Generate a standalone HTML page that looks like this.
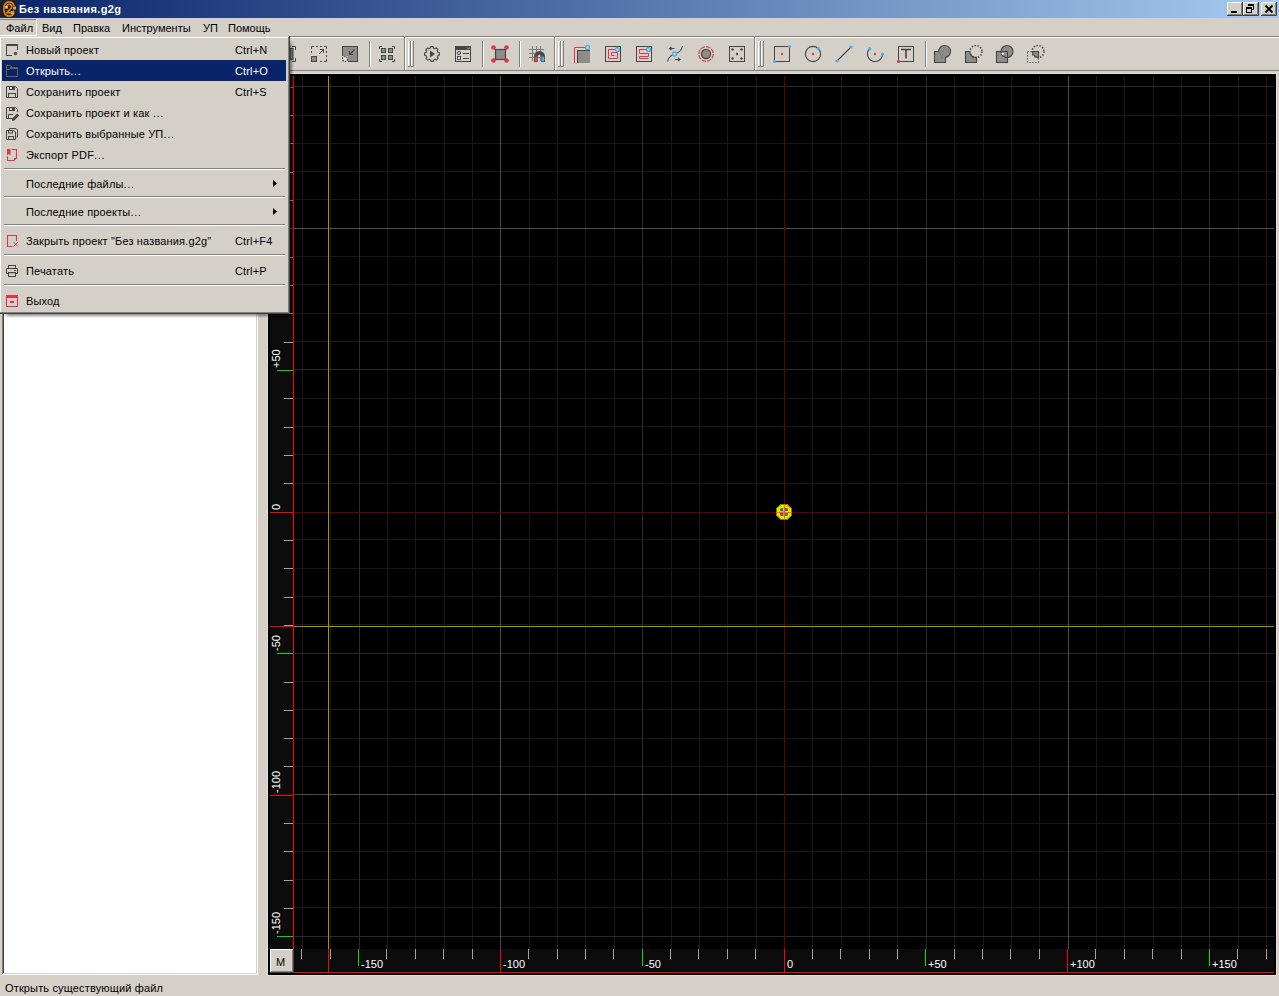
<!DOCTYPE html><html><head><meta charset="utf-8"><style>
html,body{margin:0;padding:0;}
body{width:1279px;height:996px;position:relative;overflow:hidden;background:#D4D0C8;font-family:"Liberation Sans",sans-serif;font-size:11px;}
.t{position:absolute;white-space:nowrap;line-height:13px;font-size:11px;}
svg{display:block;overflow:visible}
</style></head><body>
<div style="position:absolute;left:0px;top:0px;width:1279px;height:18px;background:linear-gradient(to right,#0A246A,#A6CAF0);"></div>
<svg style="position:absolute;left:1px;top:1px;" width="16" height="16" viewBox="0 0 16 16"><rect x="0" y="0" width="16" height="16" fill="#2A200C"/><path d="M13 5.2 C12.4 2.2 10.6 0.9 8 0.9 C4.6 0.9 2.9 3.6 2.9 8 C2.9 12.4 4.6 15.1 8 15.1 C11 15.1 12.7 13.7 12.7 11.5 C12.7 10.6 12.3 10 11.8 9.8" fill="none" stroke="#E08000" stroke-width="1.7"/><path d="M5.6 5.6 C6 3.9 7 3.3 8.2 3.3 C10 3.3 10.8 4.5 10.8 5.8 C10.8 7.6 7.6 9.4 5.9 11.8 L9.6 11.8" fill="none" stroke="#E08000" stroke-width="1.6"/><rect x="4.2" y="5" width="2.6" height="2.6" fill="#D8D0A0"/><rect x="12.2" y="5.6" width="2.8" height="2.8" fill="#E0D8A8"/><rect x="9.6" y="10.4" width="2.8" height="2.8" fill="#E0D8A8"/><path d="M12.2 7 H15 M9.6 11.8 H12.4" stroke="#6A6040" stroke-width="0.7"/></svg>
<div class="t" style="left:19px;top:3px;color:#fff;font-weight:bold;letter-spacing:0.4px">Без названия.g2g</div>
<svg style="position:absolute;left:1227px;top:2px;" width="16" height="14" viewBox="0 0 16 14"><rect x="0" y="0" width="16" height="14" fill="#D4D0C8"/><path d="M0.5 13 V0.5 H15" stroke="#fff" fill="none"/><path d="M0 13.5 H15.5 V0" stroke="#404040" fill="none"/><path d="M1 12.5 H14.5 V1" stroke="#808080" fill="none"/><rect x="4" y="9" width="6" height="2" fill="#000"/></svg>
<svg style="position:absolute;left:1243px;top:2px;" width="16" height="14" viewBox="0 0 16 14"><rect x="0" y="0" width="16" height="14" fill="#D4D0C8"/><path d="M0.5 13 V0.5 H15" stroke="#fff" fill="none"/><path d="M0 13.5 H15.5 V0" stroke="#404040" fill="none"/><path d="M1 12.5 H14.5 V1" stroke="#808080" fill="none"/><path d="M5.5 4 V2.5 H10.5 V7.5 H9" fill="none" stroke="#000"/><rect x="5" y="2" width="6" height="2" fill="#000"/><rect x="3.5" y="5.5" width="5" height="5" fill="none" stroke="#000"/><rect x="3" y="5" width="6" height="2" fill="#000"/></svg>
<svg style="position:absolute;left:1261px;top:2px;" width="16" height="14" viewBox="0 0 16 14"><rect x="0" y="0" width="16" height="14" fill="#D4D0C8"/><path d="M0.5 13 V0.5 H15" stroke="#fff" fill="none"/><path d="M0 13.5 H15.5 V0" stroke="#404040" fill="none"/><path d="M1 12.5 H14.5 V1" stroke="#808080" fill="none"/><path d="M4.5 3.5 L11.5 10.5 M11.5 3.5 L4.5 10.5" stroke="#000" stroke-width="1.9"/></svg>
<svg style="position:absolute;left:0px;top:19px;" width="37" height="17" viewBox="0 0 37 17"><path d="M0 0.5 H36" stroke="#808080"/><path d="M36.5 0 V16.5 H0" stroke="#fff" fill="none"/></svg>
<div class="t" style="left:6px;top:22px;color:#000;font-weight:normal;">Файл</div>
<div class="t" style="left:42px;top:22px;color:#000;font-weight:normal;">Вид</div>
<div class="t" style="left:73px;top:22px;color:#000;font-weight:normal;">Правка</div>
<div class="t" style="left:122px;top:22px;color:#000;font-weight:normal;">Инструменты</div>
<div class="t" style="left:203px;top:22px;color:#000;font-weight:normal;">УП</div>
<div class="t" style="left:228px;top:22px;color:#000;font-weight:normal;">Помощь</div>
<div style="position:absolute;left:0px;top:36px;width:1279px;height:1px;background:#808080;"></div>
<div style="position:absolute;left:0px;top:37px;width:1279px;height:1px;background:#fff;"></div>
<div style="position:absolute;left:0px;top:70px;width:1279px;height:1px;background:#808080;"></div>
<div style="position:absolute;left:404px;top:37px;width:1px;height:34px;background:#808080;"></div>
<div style="position:absolute;left:405px;top:37px;width:1px;height:33px;background:#fff;"></div>
<div style="position:absolute;left:554px;top:37px;width:1px;height:34px;background:#808080;"></div>
<div style="position:absolute;left:555px;top:37px;width:1px;height:33px;background:#fff;"></div>
<div style="position:absolute;left:754px;top:37px;width:1px;height:34px;background:#808080;"></div>
<div style="position:absolute;left:755px;top:37px;width:1px;height:33px;background:#fff;"></div>
<svg style="position:absolute;left:408px;top:41px;" width="6" height="26" viewBox="0 0 6 26"><path d="M0.5 25 V0.5 H2" stroke="#fff" fill="none"/><path d="M0 25.5 H2.5 V0" stroke="#808080" fill="none"/><path d="M3.5 25 V0.5 H5" stroke="#fff" fill="none"/><path d="M3 25.5 H5.5 V0" stroke="#808080" fill="none"/></svg>
<svg style="position:absolute;left:558px;top:41px;" width="6" height="26" viewBox="0 0 6 26"><path d="M0.5 25 V0.5 H2" stroke="#fff" fill="none"/><path d="M0 25.5 H2.5 V0" stroke="#808080" fill="none"/><path d="M3.5 25 V0.5 H5" stroke="#fff" fill="none"/><path d="M3 25.5 H5.5 V0" stroke="#808080" fill="none"/></svg>
<svg style="position:absolute;left:758px;top:41px;" width="6" height="26" viewBox="0 0 6 26"><path d="M0.5 25 V0.5 H2" stroke="#fff" fill="none"/><path d="M0 25.5 H2.5 V0" stroke="#808080" fill="none"/><path d="M3.5 25 V0.5 H5" stroke="#fff" fill="none"/><path d="M3 25.5 H5.5 V0" stroke="#808080" fill="none"/></svg>
<div style="position:absolute;left:369px;top:41px;width:1px;height:26px;background:#808080;"></div>
<div style="position:absolute;left:370px;top:41px;width:1px;height:26px;background:#fff;"></div>
<div style="position:absolute;left:482px;top:41px;width:1px;height:26px;background:#808080;"></div>
<div style="position:absolute;left:483px;top:41px;width:1px;height:26px;background:#fff;"></div>
<div style="position:absolute;left:519px;top:41px;width:1px;height:26px;background:#808080;"></div>
<div style="position:absolute;left:520px;top:41px;width:1px;height:26px;background:#fff;"></div>
<div style="position:absolute;left:925px;top:41px;width:1px;height:26px;background:#808080;"></div>
<div style="position:absolute;left:926px;top:41px;width:1px;height:26px;background:#fff;"></div>
<svg style="position:absolute;left:280px;top:46px;" width="16" height="16" viewBox="0 0 16 16"><rect x="10" y="2.5" width="3" height="11" fill="#8E8C88" stroke="#454545"/><path d="M12 0.5 H15.5 V4 M15.5 12 V15.5 H12" stroke="#454545" fill="none"/></svg>
<svg style="position:absolute;left:311px;top:46px;" width="16" height="16" viewBox="0 0 16 16"><path d="M0.5 3 V0.5 H3 M13 0.5 H15.5 V3 M15.5 13 V15.5 H13" stroke="#454545" fill="none"/><path d="M5 0.5 H7 M9 0.5 H11 M0.5 5 V7 M15.5 5 V7 M15.5 9 V11 M9 15.5 H11" stroke="#454545"/><rect x="0.5" y="10.5" width="5" height="5" fill="#8E8C88" stroke="#454545"/><path d="M8 8 L12.5 3.5 M9 3.5 H12.5 V7" stroke="#454545" fill="none" stroke-width="1"/></svg>
<svg style="position:absolute;left:342px;top:46px;" width="16" height="16" viewBox="0 0 16 16"><rect x="0.5" y="0.5" width="15" height="15" fill="#8E8C88" stroke="#454545"/><rect x="0" y="10" width="6" height="6" fill="#D4D0C8"/><circle cx="3" cy="13" r="2.5" fill="#E4E0D8" stroke="#454545" stroke-width="1.2" stroke-dasharray="1.6,1"/><path d="M12.5 3.5 L7.5 8.5 M7.5 5 V8.5 H11" stroke="#454545" fill="none" stroke-width="1.1"/></svg>
<svg style="position:absolute;left:379px;top:46px;" width="16" height="16" viewBox="0 0 16 16"><path d="M0.5 3 V0.5 H3 M13 0.5 H15.5 V3 M15.5 13 V15.5 H13 M3 15.5 H0.5 V13" stroke="#454545" fill="none"/><rect x="2.5" y="2.5" width="4" height="4" fill="#8E8C88" stroke="#454545"/><rect x="9.5" y="2.5" width="4" height="4" fill="#8E8C88" stroke="#454545"/><rect x="2.5" y="9.5" width="4" height="4" fill="#8E8C88" stroke="#454545"/><rect x="9.5" y="9.5" width="4" height="4" fill="#8E8C88" stroke="#454545"/></svg>
<svg style="position:absolute;left:424px;top:46px;" width="16" height="16" viewBox="0 0 16 16"><path d="M15.26 6.56 L15.36 7.19 L15.40 7.84 L15.38 8.48 L15.31 9.13 L13.93 9.45 L13.78 9.96 L13.58 10.46 L13.35 10.93 L14.15 12.11 L13.77 12.63 L13.35 13.12 L12.88 13.56 L12.38 13.97 L11.16 13.21 L10.70 13.47 L10.21 13.69 L9.71 13.86 L9.44 15.26 L8.81 15.36 L8.16 15.40 L7.52 15.38 L6.87 15.31 L6.55 13.93 L6.04 13.78 L5.54 13.58 L5.07 13.35 L3.89 14.15 L3.37 13.77 L2.88 13.35 L2.44 12.88 L2.03 12.38 L2.79 11.16 L2.53 10.70 L2.31 10.21 L2.14 9.71 L0.74 9.44 L0.64 8.81 L0.60 8.16 L0.62 7.52 L0.69 6.87 L2.07 6.55 L2.22 6.04 L2.42 5.54 L2.65 5.07 L1.85 3.89 L2.23 3.37 L2.65 2.88 L3.12 2.44 L3.62 2.03 L4.84 2.79 L5.30 2.53 L5.79 2.31 L6.29 2.14 L6.56 0.74 L7.19 0.64 L7.84 0.60 L8.48 0.62 L9.13 0.69 L9.45 2.07 L9.96 2.22 L10.46 2.42 L10.93 2.65 L12.11 1.85 L12.63 2.23 L13.12 2.65 L13.56 3.12 L13.97 3.62 L13.21 4.84 L13.47 5.30 L13.69 5.79 L13.86 6.29Z" fill="none" stroke="#454545" stroke-width="1.1"/><path d="M6 4.5 L11 8 L6 11.5Z" fill="#454545"/></svg>
<svg style="position:absolute;left:455px;top:46px;" width="16" height="16" viewBox="0 0 16 16"><rect x="0.5" y="0.5" width="15" height="15" fill="#D4D0C8" stroke="#454545"/><rect x="0" y="0" width="16" height="4" fill="#454545"/><path d="M12 1.5 L13.5 3 L15 1.5" stroke="#ccc" fill="none" stroke-width="0.8"/><circle cx="4" cy="7" r="1.6" fill="none" stroke="#454545"/><rect x="2.5" y="10.5" width="3" height="3" fill="#eee" stroke="#454545"/><path d="M8 7.5 H14 M8 12.5 H14" stroke="#454545"/></svg>
<svg style="position:absolute;left:491px;top:45px;" width="18" height="18" viewBox="0 0 18 18"><rect x="4.5" y="4.5" width="10" height="10" fill="#8E8C88" stroke="#454545" stroke-width="1.2"/><circle cx="2.5" cy="2.5" r="2.3" fill="#E0344C"/><circle cx="15.5" cy="2.5" r="2.3" fill="#E0344C"/><circle cx="2.5" cy="15.5" r="2.3" fill="#E0344C"/><circle cx="15.5" cy="15.5" r="2.3" fill="#E0344C"/></svg>
<svg style="position:absolute;left:529px;top:46px;" width="16" height="16" viewBox="0 0 16 16"><path d="M3.5 0 V15 M7.5 0 V15 M11.5 0 V15 M0 3.5 H15 M0 7.5 H15 M0 11.5 H15" stroke="#7E7C78" stroke-width="1"/><path d="M5 16 V10.5 A5.5 5.5 0 0 1 16 10.5 V16 H12.3 V10.5 A1.75 1.75 0 0 0 8.8 10.5 V16 Z" fill="#4A4A4A"/><rect x="5.8" y="10.6" width="2.3" height="4.6" fill="#F0405A"/><rect x="12.9" y="10.6" width="2.3" height="4.6" fill="#30BCF8"/></svg>
<svg style="position:absolute;left:574px;top:46px;" width="16" height="18" viewBox="0 0 16 18"><path d="M0.5 17 V1.5 H12" stroke="#E0344C" fill="none"/><rect x="3" y="4" width="13" height="13" fill="#8E8C88"/><path d="M3.5 17 V4.5 H16" stroke="#454545" fill="none"/><circle cx="13.5" cy="1.5" r="2" fill="#D4D0C8" stroke="#3CB4F0" stroke-width="1.3"/></svg>
<svg style="position:absolute;left:605px;top:46px;" width="16" height="16" viewBox="0 0 16 16"><rect x="0.5" y="0.5" width="15" height="15" fill="#D4D0C8" stroke="#454545"/><path d="M10.5 3.5 H3.5 V12.5 H12.5 V6.5 H6.5 V9.5 H9.5" stroke="#E0344C" fill="none"/><circle cx="12.5" cy="3.5" r="2" fill="#D4D0C8" stroke="#3CB4F0" stroke-width="1.3"/></svg>
<svg style="position:absolute;left:636px;top:46px;" width="16" height="16" viewBox="0 0 16 16"><rect x="0.5" y="0.5" width="15" height="15" fill="#D4D0C8" stroke="#454545"/><path d="M11 3.5 H3.5 V7.5 H12.5 V10.5 H3.5 V12.5 H12.5" stroke="#E0344C" fill="none"/><circle cx="12.5" cy="3.5" r="2" fill="#D4D0C8" stroke="#3CB4F0" stroke-width="1.3"/></svg>
<svg style="position:absolute;left:667px;top:46px;" width="16" height="16" viewBox="0 0 16 16"><path d="M0.5 15.5 C2 10 5 9 8 8 C11 7 14.5 5 15.5 0" stroke="#454545" fill="none" stroke-width="1.1"/><path d="M7.5 2.5 H2.5 M4.5 1 L2.5 2.5 L4.5 4 M8 13.5 H13 M11 12 L13 13.5 L11 15" stroke="#454545" fill="none" stroke-width="1.1"/><circle cx="7.5" cy="8" r="2" fill="#D4D0C8" stroke="#3CB4F0" stroke-width="1.3"/></svg>
<svg style="position:absolute;left:698px;top:46px;" width="16" height="16" viewBox="0 0 16 16"><circle cx="8" cy="8" r="7.3" fill="none" stroke="#E0344C" stroke-width="1.2" stroke-dasharray="4.6,1.1"/><circle cx="8" cy="8" r="4.6" fill="#8E8C88" stroke="#454545" stroke-width="1.2"/></svg>
<svg style="position:absolute;left:729px;top:46px;" width="16" height="16" viewBox="0 0 16 16"><rect x="0.5" y="0.5" width="15" height="15" fill="none" stroke="#454545"/><circle cx="3.5" cy="3.5" r="1.2" fill="#454545"/><circle cx="12.5" cy="3.5" r="1.2" fill="#454545"/><circle cx="8" cy="8" r="1.2" fill="#454545"/><circle cx="3.5" cy="12.5" r="1.2" fill="#454545"/><circle cx="12.5" cy="12.5" r="1.2" fill="#454545"/></svg>
<svg style="position:absolute;left:773px;top:45px;" width="18" height="18" viewBox="0 0 18 18"><rect x="1.5" y="1.5" width="15" height="15" fill="none" stroke="#454545"/><circle cx="9" cy="9" r="1.2" fill="#E0344C"/><circle cx="1.5" cy="16.5" r="1.6" fill="#3CB4F0"/><circle cx="16.5" cy="1.5" r="1.6" fill="#3CB4F0"/></svg>
<svg style="position:absolute;left:805px;top:46px;" width="16" height="16" viewBox="0 0 16 16"><circle cx="8" cy="8" r="7.6" fill="none" stroke="#454545" stroke-width="1.1"/><circle cx="8" cy="8" r="1.2" fill="#E0344C"/><circle cx="13.3" cy="2.7" r="1.6" fill="#3CB4F0"/></svg>
<svg style="position:absolute;left:836px;top:46px;" width="16" height="16" viewBox="0 0 16 16"><path d="M1 15 L15 1" stroke="#454545" stroke-width="1.1"/><circle cx="1" cy="15" r="1.6" fill="#3CB4F0"/><circle cx="15" cy="1" r="1.6" fill="#3CB4F0"/></svg>
<svg style="position:absolute;left:867px;top:46px;" width="16" height="16" viewBox="0 0 16 16"><path d="M2.7 2.7 A7.5 7.5 0 1 0 15.5 8" stroke="#454545" fill="none" stroke-width="1.1"/><circle cx="8" cy="8" r="1.2" fill="#E0344C"/><circle cx="2.7" cy="2.7" r="1.6" fill="#3CB4F0"/><circle cx="15.5" cy="8" r="1.6" fill="#3CB4F0"/></svg>
<svg style="position:absolute;left:898px;top:46px;" width="16" height="16" viewBox="0 0 16 16"><rect x="0.5" y="0.5" width="15" height="15" fill="none" stroke="#454545"/><path d="M3 3.5 H13 M8 3.5 V12.5" stroke="#454545" stroke-width="1.6"/><circle cx="0.5" cy="15.5" r="1.6" fill="#E0344C"/></svg>
<svg style="position:absolute;left:934px;top:46px;" width="18" height="18" viewBox="0 0 18 18"><path d="M0.5 5.5 H4.6 A6 6 0 1 1 11.5 11.4 V16.5 H0.5Z" fill="#8E8C88" stroke="#454545" stroke-width="1.1"/><path d="M8 5.5 h1 M8 8.5 h1 M6 8.5 h1 M7.5 11.5 h1 M5 7 h1" stroke="#666" stroke-width="0.8"/></svg>
<svg style="position:absolute;left:965px;top:46px;" width="18" height="18" viewBox="0 0 18 18"><path d="M0.5 5.5 H4.6 A6 6 0 0 0 11.5 11.4 V16.5 H0.5Z" fill="#8E8C88" stroke="#454545" stroke-width="1.1"/><circle cx="11" cy="5.5" r="6" fill="none" stroke="#454545" stroke-width="1.5" stroke-dasharray="1.4,1.5"/></svg>
<svg style="position:absolute;left:996px;top:46px;" width="18" height="18" viewBox="0 0 18 18"><rect x="0.5" y="5.5" width="11" height="11" fill="#8E8C88" stroke="#454545" stroke-width="1.1"/><circle cx="11" cy="5.5" r="6" fill="#8E8C88" stroke="#454545" stroke-width="1.1"/><path d="M5.2 7 L8.2 7 L7 9.5Z" fill="#fff"/><path d="M0.5 5.5 H11.5 V16.5" stroke="#454545" fill="none" stroke-width="1.1"/></svg>
<svg style="position:absolute;left:1027px;top:46px;" width="18" height="18" viewBox="0 0 18 18"><rect x="0.5" y="5.5" width="11" height="11" fill="none" stroke="#454545" stroke-width="1.1" stroke-dasharray="1.2,1.8"/><circle cx="11" cy="5.5" r="6" fill="none" stroke="#454545" stroke-width="1.5" stroke-dasharray="1.4,1.5"/><path d="M5.5 5.5 H11.5 V11.4 A6 6 0 0 1 5.5 5.5Z" fill="#8E8C88" stroke="#454545" stroke-width="1.1"/></svg>
<svg style="position:absolute;left:2px;top:74px;" width="256" height="901" viewBox="0 0 256 901"><rect x="0" y="0" width="256" height="901" fill="#fff"/><path d="M0.5 900 V0.5 H255" stroke="#808080" fill="none"/><path d="M1.5 899 V1.5 H254" stroke="#404040" fill="none"/><path d="M1 899.5 H254.5 V1" stroke="#D4D0C8" fill="none"/><path d="M0 900.5 H255.5 V0" stroke="#fff" fill="none"/></svg>
<svg style="position:absolute;left:267px;top:73px" width="1010" height="903" viewBox="0 0 1010 903" shape-rendering="crispEdges"><rect x="0" y="0" width="1010" height="903" fill="#E4E0D8"/><rect x="1" y="1" width="1008" height="901" fill="#000"/><rect x="3" y="3" width="23" height="873" fill="#0C0C0C"/><rect x="27" y="876" width="980" height="23" fill="#0C0C0C"/><rect x="35" y="3" width="1" height="873" fill="#181818"/><rect x="63" y="3" width="1" height="873" fill="#181818"/><rect x="120" y="3" width="1" height="873" fill="#181818"/><rect x="148" y="3" width="1" height="873" fill="#181818"/><rect x="177" y="3" width="1" height="873" fill="#181818"/><rect x="205" y="3" width="1" height="873" fill="#181818"/><rect x="262" y="3" width="1" height="873" fill="#181818"/><rect x="290" y="3" width="1" height="873" fill="#181818"/><rect x="318" y="3" width="1" height="873" fill="#181818"/><rect x="347" y="3" width="1" height="873" fill="#181818"/><rect x="404" y="3" width="1" height="873" fill="#181818"/><rect x="432" y="3" width="1" height="873" fill="#181818"/><rect x="460" y="3" width="1" height="873" fill="#181818"/><rect x="489" y="3" width="1" height="873" fill="#181818"/><rect x="545" y="3" width="1" height="873" fill="#181818"/><rect x="574" y="3" width="1" height="873" fill="#181818"/><rect x="602" y="3" width="1" height="873" fill="#181818"/><rect x="630" y="3" width="1" height="873" fill="#181818"/><rect x="687" y="3" width="1" height="873" fill="#181818"/><rect x="716" y="3" width="1" height="873" fill="#181818"/><rect x="744" y="3" width="1" height="873" fill="#181818"/><rect x="772" y="3" width="1" height="873" fill="#181818"/><rect x="829" y="3" width="1" height="873" fill="#181818"/><rect x="857" y="3" width="1" height="873" fill="#181818"/><rect x="886" y="3" width="1" height="873" fill="#181818"/><rect x="914" y="3" width="1" height="873" fill="#181818"/><rect x="971" y="3" width="1" height="873" fill="#181818"/><rect x="999" y="3" width="1" height="873" fill="#181818"/><rect x="27" y="42" width="980" height="1" fill="#181818"/><rect x="27" y="70" width="980" height="1" fill="#181818"/><rect x="27" y="98" width="980" height="1" fill="#181818"/><rect x="27" y="126" width="980" height="1" fill="#181818"/><rect x="27" y="183" width="980" height="1" fill="#181818"/><rect x="27" y="211" width="980" height="1" fill="#181818"/><rect x="27" y="240" width="980" height="1" fill="#181818"/><rect x="27" y="268" width="980" height="1" fill="#181818"/><rect x="27" y="325" width="980" height="1" fill="#181818"/><rect x="27" y="353" width="980" height="1" fill="#181818"/><rect x="27" y="381" width="980" height="1" fill="#181818"/><rect x="27" y="410" width="980" height="1" fill="#181818"/><rect x="27" y="466" width="980" height="1" fill="#181818"/><rect x="27" y="495" width="980" height="1" fill="#181818"/><rect x="27" y="523" width="980" height="1" fill="#181818"/><rect x="27" y="551" width="980" height="1" fill="#181818"/><rect x="27" y="608" width="980" height="1" fill="#181818"/><rect x="27" y="636" width="980" height="1" fill="#181818"/><rect x="27" y="665" width="980" height="1" fill="#181818"/><rect x="27" y="693" width="980" height="1" fill="#181818"/><rect x="27" y="750" width="980" height="1" fill="#181818"/><rect x="27" y="778" width="980" height="1" fill="#181818"/><rect x="27" y="806" width="980" height="1" fill="#181818"/><rect x="27" y="834" width="980" height="1" fill="#181818"/><rect x="92" y="3" width="1" height="873" fill="#2A2A2A"/><rect x="375" y="3" width="1" height="873" fill="#2A2A2A"/><rect x="659" y="3" width="1" height="873" fill="#2A2A2A"/><rect x="942" y="3" width="1" height="873" fill="#2A2A2A"/><rect x="27" y="13" width="980" height="1" fill="#2A2A2A"/><rect x="27" y="296" width="980" height="1" fill="#2A2A2A"/><rect x="27" y="580" width="980" height="1" fill="#2A2A2A"/><rect x="27" y="863" width="980" height="1" fill="#2A2A2A"/><rect x="233" y="3" width="1" height="873" fill="#4A4A4A"/><rect x="517" y="3" width="1" height="873" fill="#4A4A4A"/><rect x="801" y="3" width="1" height="873" fill="#4A4A4A"/><rect x="27" y="155" width="980" height="1" fill="#4A4A4A"/><rect x="27" y="721" width="980" height="1" fill="#4A4A4A"/><rect x="35" y="13" width="1" height="1" fill="#333333"/><rect x="35" y="155" width="1" height="1" fill="#565656"/><rect x="35" y="296" width="1" height="1" fill="#333333"/><rect x="35" y="580" width="1" height="1" fill="#333333"/><rect x="35" y="721" width="1" height="1" fill="#565656"/><rect x="35" y="863" width="1" height="1" fill="#333333"/><rect x="63" y="13" width="1" height="1" fill="#333333"/><rect x="63" y="155" width="1" height="1" fill="#565656"/><rect x="63" y="296" width="1" height="1" fill="#333333"/><rect x="63" y="580" width="1" height="1" fill="#333333"/><rect x="63" y="721" width="1" height="1" fill="#565656"/><rect x="63" y="863" width="1" height="1" fill="#333333"/><rect x="92" y="13" width="1" height="1" fill="#333333"/><rect x="92" y="42" width="1" height="1" fill="#333333"/><rect x="92" y="70" width="1" height="1" fill="#333333"/><rect x="92" y="98" width="1" height="1" fill="#333333"/><rect x="92" y="126" width="1" height="1" fill="#333333"/><rect x="92" y="155" width="1" height="1" fill="#565656"/><rect x="92" y="183" width="1" height="1" fill="#333333"/><rect x="92" y="211" width="1" height="1" fill="#333333"/><rect x="92" y="240" width="1" height="1" fill="#333333"/><rect x="92" y="268" width="1" height="1" fill="#333333"/><rect x="92" y="296" width="1" height="1" fill="#333333"/><rect x="92" y="325" width="1" height="1" fill="#333333"/><rect x="92" y="353" width="1" height="1" fill="#333333"/><rect x="92" y="381" width="1" height="1" fill="#333333"/><rect x="92" y="410" width="1" height="1" fill="#333333"/><rect x="92" y="466" width="1" height="1" fill="#333333"/><rect x="92" y="495" width="1" height="1" fill="#333333"/><rect x="92" y="523" width="1" height="1" fill="#333333"/><rect x="92" y="551" width="1" height="1" fill="#333333"/><rect x="92" y="580" width="1" height="1" fill="#333333"/><rect x="92" y="608" width="1" height="1" fill="#333333"/><rect x="92" y="636" width="1" height="1" fill="#333333"/><rect x="92" y="665" width="1" height="1" fill="#333333"/><rect x="92" y="693" width="1" height="1" fill="#333333"/><rect x="92" y="721" width="1" height="1" fill="#565656"/><rect x="92" y="750" width="1" height="1" fill="#333333"/><rect x="92" y="778" width="1" height="1" fill="#333333"/><rect x="92" y="806" width="1" height="1" fill="#333333"/><rect x="92" y="834" width="1" height="1" fill="#333333"/><rect x="92" y="863" width="1" height="1" fill="#333333"/><rect x="120" y="13" width="1" height="1" fill="#333333"/><rect x="120" y="155" width="1" height="1" fill="#565656"/><rect x="120" y="296" width="1" height="1" fill="#333333"/><rect x="120" y="580" width="1" height="1" fill="#333333"/><rect x="120" y="721" width="1" height="1" fill="#565656"/><rect x="120" y="863" width="1" height="1" fill="#333333"/><rect x="148" y="13" width="1" height="1" fill="#333333"/><rect x="148" y="155" width="1" height="1" fill="#565656"/><rect x="148" y="296" width="1" height="1" fill="#333333"/><rect x="148" y="580" width="1" height="1" fill="#333333"/><rect x="148" y="721" width="1" height="1" fill="#565656"/><rect x="148" y="863" width="1" height="1" fill="#333333"/><rect x="177" y="13" width="1" height="1" fill="#333333"/><rect x="177" y="155" width="1" height="1" fill="#565656"/><rect x="177" y="296" width="1" height="1" fill="#333333"/><rect x="177" y="580" width="1" height="1" fill="#333333"/><rect x="177" y="721" width="1" height="1" fill="#565656"/><rect x="177" y="863" width="1" height="1" fill="#333333"/><rect x="205" y="13" width="1" height="1" fill="#333333"/><rect x="205" y="155" width="1" height="1" fill="#565656"/><rect x="205" y="296" width="1" height="1" fill="#333333"/><rect x="205" y="580" width="1" height="1" fill="#333333"/><rect x="205" y="721" width="1" height="1" fill="#565656"/><rect x="205" y="863" width="1" height="1" fill="#333333"/><rect x="233" y="13" width="1" height="1" fill="#565656"/><rect x="233" y="42" width="1" height="1" fill="#565656"/><rect x="233" y="70" width="1" height="1" fill="#565656"/><rect x="233" y="98" width="1" height="1" fill="#565656"/><rect x="233" y="126" width="1" height="1" fill="#565656"/><rect x="233" y="155" width="1" height="1" fill="#565656"/><rect x="233" y="183" width="1" height="1" fill="#565656"/><rect x="233" y="211" width="1" height="1" fill="#565656"/><rect x="233" y="240" width="1" height="1" fill="#565656"/><rect x="233" y="268" width="1" height="1" fill="#565656"/><rect x="233" y="296" width="1" height="1" fill="#565656"/><rect x="233" y="325" width="1" height="1" fill="#565656"/><rect x="233" y="353" width="1" height="1" fill="#565656"/><rect x="233" y="381" width="1" height="1" fill="#565656"/><rect x="233" y="410" width="1" height="1" fill="#565656"/><rect x="233" y="466" width="1" height="1" fill="#565656"/><rect x="233" y="495" width="1" height="1" fill="#565656"/><rect x="233" y="523" width="1" height="1" fill="#565656"/><rect x="233" y="551" width="1" height="1" fill="#565656"/><rect x="233" y="580" width="1" height="1" fill="#565656"/><rect x="233" y="608" width="1" height="1" fill="#565656"/><rect x="233" y="636" width="1" height="1" fill="#565656"/><rect x="233" y="665" width="1" height="1" fill="#565656"/><rect x="233" y="693" width="1" height="1" fill="#565656"/><rect x="233" y="721" width="1" height="1" fill="#565656"/><rect x="233" y="750" width="1" height="1" fill="#565656"/><rect x="233" y="778" width="1" height="1" fill="#565656"/><rect x="233" y="806" width="1" height="1" fill="#565656"/><rect x="233" y="834" width="1" height="1" fill="#565656"/><rect x="233" y="863" width="1" height="1" fill="#565656"/><rect x="262" y="13" width="1" height="1" fill="#333333"/><rect x="262" y="155" width="1" height="1" fill="#565656"/><rect x="262" y="296" width="1" height="1" fill="#333333"/><rect x="262" y="580" width="1" height="1" fill="#333333"/><rect x="262" y="721" width="1" height="1" fill="#565656"/><rect x="262" y="863" width="1" height="1" fill="#333333"/><rect x="290" y="13" width="1" height="1" fill="#333333"/><rect x="290" y="155" width="1" height="1" fill="#565656"/><rect x="290" y="296" width="1" height="1" fill="#333333"/><rect x="290" y="580" width="1" height="1" fill="#333333"/><rect x="290" y="721" width="1" height="1" fill="#565656"/><rect x="290" y="863" width="1" height="1" fill="#333333"/><rect x="318" y="13" width="1" height="1" fill="#333333"/><rect x="318" y="155" width="1" height="1" fill="#565656"/><rect x="318" y="296" width="1" height="1" fill="#333333"/><rect x="318" y="580" width="1" height="1" fill="#333333"/><rect x="318" y="721" width="1" height="1" fill="#565656"/><rect x="318" y="863" width="1" height="1" fill="#333333"/><rect x="347" y="13" width="1" height="1" fill="#333333"/><rect x="347" y="155" width="1" height="1" fill="#565656"/><rect x="347" y="296" width="1" height="1" fill="#333333"/><rect x="347" y="580" width="1" height="1" fill="#333333"/><rect x="347" y="721" width="1" height="1" fill="#565656"/><rect x="347" y="863" width="1" height="1" fill="#333333"/><rect x="375" y="13" width="1" height="1" fill="#333333"/><rect x="375" y="42" width="1" height="1" fill="#333333"/><rect x="375" y="70" width="1" height="1" fill="#333333"/><rect x="375" y="98" width="1" height="1" fill="#333333"/><rect x="375" y="126" width="1" height="1" fill="#333333"/><rect x="375" y="155" width="1" height="1" fill="#565656"/><rect x="375" y="183" width="1" height="1" fill="#333333"/><rect x="375" y="211" width="1" height="1" fill="#333333"/><rect x="375" y="240" width="1" height="1" fill="#333333"/><rect x="375" y="268" width="1" height="1" fill="#333333"/><rect x="375" y="296" width="1" height="1" fill="#333333"/><rect x="375" y="325" width="1" height="1" fill="#333333"/><rect x="375" y="353" width="1" height="1" fill="#333333"/><rect x="375" y="381" width="1" height="1" fill="#333333"/><rect x="375" y="410" width="1" height="1" fill="#333333"/><rect x="375" y="466" width="1" height="1" fill="#333333"/><rect x="375" y="495" width="1" height="1" fill="#333333"/><rect x="375" y="523" width="1" height="1" fill="#333333"/><rect x="375" y="551" width="1" height="1" fill="#333333"/><rect x="375" y="580" width="1" height="1" fill="#333333"/><rect x="375" y="608" width="1" height="1" fill="#333333"/><rect x="375" y="636" width="1" height="1" fill="#333333"/><rect x="375" y="665" width="1" height="1" fill="#333333"/><rect x="375" y="693" width="1" height="1" fill="#333333"/><rect x="375" y="721" width="1" height="1" fill="#565656"/><rect x="375" y="750" width="1" height="1" fill="#333333"/><rect x="375" y="778" width="1" height="1" fill="#333333"/><rect x="375" y="806" width="1" height="1" fill="#333333"/><rect x="375" y="834" width="1" height="1" fill="#333333"/><rect x="375" y="863" width="1" height="1" fill="#333333"/><rect x="404" y="13" width="1" height="1" fill="#333333"/><rect x="404" y="155" width="1" height="1" fill="#565656"/><rect x="404" y="296" width="1" height="1" fill="#333333"/><rect x="404" y="580" width="1" height="1" fill="#333333"/><rect x="404" y="721" width="1" height="1" fill="#565656"/><rect x="404" y="863" width="1" height="1" fill="#333333"/><rect x="432" y="13" width="1" height="1" fill="#333333"/><rect x="432" y="155" width="1" height="1" fill="#565656"/><rect x="432" y="296" width="1" height="1" fill="#333333"/><rect x="432" y="580" width="1" height="1" fill="#333333"/><rect x="432" y="721" width="1" height="1" fill="#565656"/><rect x="432" y="863" width="1" height="1" fill="#333333"/><rect x="460" y="13" width="1" height="1" fill="#333333"/><rect x="460" y="155" width="1" height="1" fill="#565656"/><rect x="460" y="296" width="1" height="1" fill="#333333"/><rect x="460" y="580" width="1" height="1" fill="#333333"/><rect x="460" y="721" width="1" height="1" fill="#565656"/><rect x="460" y="863" width="1" height="1" fill="#333333"/><rect x="489" y="13" width="1" height="1" fill="#333333"/><rect x="489" y="155" width="1" height="1" fill="#565656"/><rect x="489" y="296" width="1" height="1" fill="#333333"/><rect x="489" y="580" width="1" height="1" fill="#333333"/><rect x="489" y="721" width="1" height="1" fill="#565656"/><rect x="489" y="863" width="1" height="1" fill="#333333"/><rect x="545" y="13" width="1" height="1" fill="#333333"/><rect x="545" y="155" width="1" height="1" fill="#565656"/><rect x="545" y="296" width="1" height="1" fill="#333333"/><rect x="545" y="580" width="1" height="1" fill="#333333"/><rect x="545" y="721" width="1" height="1" fill="#565656"/><rect x="545" y="863" width="1" height="1" fill="#333333"/><rect x="574" y="13" width="1" height="1" fill="#333333"/><rect x="574" y="155" width="1" height="1" fill="#565656"/><rect x="574" y="296" width="1" height="1" fill="#333333"/><rect x="574" y="580" width="1" height="1" fill="#333333"/><rect x="574" y="721" width="1" height="1" fill="#565656"/><rect x="574" y="863" width="1" height="1" fill="#333333"/><rect x="602" y="13" width="1" height="1" fill="#333333"/><rect x="602" y="155" width="1" height="1" fill="#565656"/><rect x="602" y="296" width="1" height="1" fill="#333333"/><rect x="602" y="580" width="1" height="1" fill="#333333"/><rect x="602" y="721" width="1" height="1" fill="#565656"/><rect x="602" y="863" width="1" height="1" fill="#333333"/><rect x="630" y="13" width="1" height="1" fill="#333333"/><rect x="630" y="155" width="1" height="1" fill="#565656"/><rect x="630" y="296" width="1" height="1" fill="#333333"/><rect x="630" y="580" width="1" height="1" fill="#333333"/><rect x="630" y="721" width="1" height="1" fill="#565656"/><rect x="630" y="863" width="1" height="1" fill="#333333"/><rect x="659" y="13" width="1" height="1" fill="#333333"/><rect x="659" y="42" width="1" height="1" fill="#333333"/><rect x="659" y="70" width="1" height="1" fill="#333333"/><rect x="659" y="98" width="1" height="1" fill="#333333"/><rect x="659" y="126" width="1" height="1" fill="#333333"/><rect x="659" y="155" width="1" height="1" fill="#565656"/><rect x="659" y="183" width="1" height="1" fill="#333333"/><rect x="659" y="211" width="1" height="1" fill="#333333"/><rect x="659" y="240" width="1" height="1" fill="#333333"/><rect x="659" y="268" width="1" height="1" fill="#333333"/><rect x="659" y="296" width="1" height="1" fill="#333333"/><rect x="659" y="325" width="1" height="1" fill="#333333"/><rect x="659" y="353" width="1" height="1" fill="#333333"/><rect x="659" y="381" width="1" height="1" fill="#333333"/><rect x="659" y="410" width="1" height="1" fill="#333333"/><rect x="659" y="466" width="1" height="1" fill="#333333"/><rect x="659" y="495" width="1" height="1" fill="#333333"/><rect x="659" y="523" width="1" height="1" fill="#333333"/><rect x="659" y="551" width="1" height="1" fill="#333333"/><rect x="659" y="580" width="1" height="1" fill="#333333"/><rect x="659" y="608" width="1" height="1" fill="#333333"/><rect x="659" y="636" width="1" height="1" fill="#333333"/><rect x="659" y="665" width="1" height="1" fill="#333333"/><rect x="659" y="693" width="1" height="1" fill="#333333"/><rect x="659" y="721" width="1" height="1" fill="#565656"/><rect x="659" y="750" width="1" height="1" fill="#333333"/><rect x="659" y="778" width="1" height="1" fill="#333333"/><rect x="659" y="806" width="1" height="1" fill="#333333"/><rect x="659" y="834" width="1" height="1" fill="#333333"/><rect x="659" y="863" width="1" height="1" fill="#333333"/><rect x="687" y="13" width="1" height="1" fill="#333333"/><rect x="687" y="155" width="1" height="1" fill="#565656"/><rect x="687" y="296" width="1" height="1" fill="#333333"/><rect x="687" y="580" width="1" height="1" fill="#333333"/><rect x="687" y="721" width="1" height="1" fill="#565656"/><rect x="687" y="863" width="1" height="1" fill="#333333"/><rect x="716" y="13" width="1" height="1" fill="#333333"/><rect x="716" y="155" width="1" height="1" fill="#565656"/><rect x="716" y="296" width="1" height="1" fill="#333333"/><rect x="716" y="580" width="1" height="1" fill="#333333"/><rect x="716" y="721" width="1" height="1" fill="#565656"/><rect x="716" y="863" width="1" height="1" fill="#333333"/><rect x="744" y="13" width="1" height="1" fill="#333333"/><rect x="744" y="155" width="1" height="1" fill="#565656"/><rect x="744" y="296" width="1" height="1" fill="#333333"/><rect x="744" y="580" width="1" height="1" fill="#333333"/><rect x="744" y="721" width="1" height="1" fill="#565656"/><rect x="744" y="863" width="1" height="1" fill="#333333"/><rect x="772" y="13" width="1" height="1" fill="#333333"/><rect x="772" y="155" width="1" height="1" fill="#565656"/><rect x="772" y="296" width="1" height="1" fill="#333333"/><rect x="772" y="580" width="1" height="1" fill="#333333"/><rect x="772" y="721" width="1" height="1" fill="#565656"/><rect x="772" y="863" width="1" height="1" fill="#333333"/><rect x="801" y="13" width="1" height="1" fill="#565656"/><rect x="801" y="42" width="1" height="1" fill="#565656"/><rect x="801" y="70" width="1" height="1" fill="#565656"/><rect x="801" y="98" width="1" height="1" fill="#565656"/><rect x="801" y="126" width="1" height="1" fill="#565656"/><rect x="801" y="155" width="1" height="1" fill="#565656"/><rect x="801" y="183" width="1" height="1" fill="#565656"/><rect x="801" y="211" width="1" height="1" fill="#565656"/><rect x="801" y="240" width="1" height="1" fill="#565656"/><rect x="801" y="268" width="1" height="1" fill="#565656"/><rect x="801" y="296" width="1" height="1" fill="#565656"/><rect x="801" y="325" width="1" height="1" fill="#565656"/><rect x="801" y="353" width="1" height="1" fill="#565656"/><rect x="801" y="381" width="1" height="1" fill="#565656"/><rect x="801" y="410" width="1" height="1" fill="#565656"/><rect x="801" y="466" width="1" height="1" fill="#565656"/><rect x="801" y="495" width="1" height="1" fill="#565656"/><rect x="801" y="523" width="1" height="1" fill="#565656"/><rect x="801" y="551" width="1" height="1" fill="#565656"/><rect x="801" y="580" width="1" height="1" fill="#565656"/><rect x="801" y="608" width="1" height="1" fill="#565656"/><rect x="801" y="636" width="1" height="1" fill="#565656"/><rect x="801" y="665" width="1" height="1" fill="#565656"/><rect x="801" y="693" width="1" height="1" fill="#565656"/><rect x="801" y="721" width="1" height="1" fill="#565656"/><rect x="801" y="750" width="1" height="1" fill="#565656"/><rect x="801" y="778" width="1" height="1" fill="#565656"/><rect x="801" y="806" width="1" height="1" fill="#565656"/><rect x="801" y="834" width="1" height="1" fill="#565656"/><rect x="801" y="863" width="1" height="1" fill="#565656"/><rect x="829" y="13" width="1" height="1" fill="#333333"/><rect x="829" y="155" width="1" height="1" fill="#565656"/><rect x="829" y="296" width="1" height="1" fill="#333333"/><rect x="829" y="580" width="1" height="1" fill="#333333"/><rect x="829" y="721" width="1" height="1" fill="#565656"/><rect x="829" y="863" width="1" height="1" fill="#333333"/><rect x="857" y="13" width="1" height="1" fill="#333333"/><rect x="857" y="155" width="1" height="1" fill="#565656"/><rect x="857" y="296" width="1" height="1" fill="#333333"/><rect x="857" y="580" width="1" height="1" fill="#333333"/><rect x="857" y="721" width="1" height="1" fill="#565656"/><rect x="857" y="863" width="1" height="1" fill="#333333"/><rect x="886" y="13" width="1" height="1" fill="#333333"/><rect x="886" y="155" width="1" height="1" fill="#565656"/><rect x="886" y="296" width="1" height="1" fill="#333333"/><rect x="886" y="580" width="1" height="1" fill="#333333"/><rect x="886" y="721" width="1" height="1" fill="#565656"/><rect x="886" y="863" width="1" height="1" fill="#333333"/><rect x="914" y="13" width="1" height="1" fill="#333333"/><rect x="914" y="155" width="1" height="1" fill="#565656"/><rect x="914" y="296" width="1" height="1" fill="#333333"/><rect x="914" y="580" width="1" height="1" fill="#333333"/><rect x="914" y="721" width="1" height="1" fill="#565656"/><rect x="914" y="863" width="1" height="1" fill="#333333"/><rect x="942" y="13" width="1" height="1" fill="#333333"/><rect x="942" y="42" width="1" height="1" fill="#333333"/><rect x="942" y="70" width="1" height="1" fill="#333333"/><rect x="942" y="98" width="1" height="1" fill="#333333"/><rect x="942" y="126" width="1" height="1" fill="#333333"/><rect x="942" y="155" width="1" height="1" fill="#565656"/><rect x="942" y="183" width="1" height="1" fill="#333333"/><rect x="942" y="211" width="1" height="1" fill="#333333"/><rect x="942" y="240" width="1" height="1" fill="#333333"/><rect x="942" y="268" width="1" height="1" fill="#333333"/><rect x="942" y="296" width="1" height="1" fill="#333333"/><rect x="942" y="325" width="1" height="1" fill="#333333"/><rect x="942" y="353" width="1" height="1" fill="#333333"/><rect x="942" y="381" width="1" height="1" fill="#333333"/><rect x="942" y="410" width="1" height="1" fill="#333333"/><rect x="942" y="466" width="1" height="1" fill="#333333"/><rect x="942" y="495" width="1" height="1" fill="#333333"/><rect x="942" y="523" width="1" height="1" fill="#333333"/><rect x="942" y="551" width="1" height="1" fill="#333333"/><rect x="942" y="580" width="1" height="1" fill="#333333"/><rect x="942" y="608" width="1" height="1" fill="#333333"/><rect x="942" y="636" width="1" height="1" fill="#333333"/><rect x="942" y="665" width="1" height="1" fill="#333333"/><rect x="942" y="693" width="1" height="1" fill="#333333"/><rect x="942" y="721" width="1" height="1" fill="#565656"/><rect x="942" y="750" width="1" height="1" fill="#333333"/><rect x="942" y="778" width="1" height="1" fill="#333333"/><rect x="942" y="806" width="1" height="1" fill="#333333"/><rect x="942" y="834" width="1" height="1" fill="#333333"/><rect x="942" y="863" width="1" height="1" fill="#333333"/><rect x="971" y="13" width="1" height="1" fill="#333333"/><rect x="971" y="155" width="1" height="1" fill="#565656"/><rect x="971" y="296" width="1" height="1" fill="#333333"/><rect x="971" y="580" width="1" height="1" fill="#333333"/><rect x="971" y="721" width="1" height="1" fill="#565656"/><rect x="971" y="863" width="1" height="1" fill="#333333"/><rect x="999" y="13" width="1" height="1" fill="#333333"/><rect x="999" y="155" width="1" height="1" fill="#565656"/><rect x="999" y="296" width="1" height="1" fill="#333333"/><rect x="999" y="580" width="1" height="1" fill="#333333"/><rect x="999" y="721" width="1" height="1" fill="#565656"/><rect x="999" y="863" width="1" height="1" fill="#333333"/><rect x="517" y="3" width="1" height="873" fill="#660000"/><rect x="27" y="439" width="980" height="1" fill="#660000"/><rect x="61" y="3" width="1" height="873" fill="#A09A00"/><rect x="27" y="553" width="980" height="1" fill="#A09A00"/><rect x="26" y="3" width="1" height="873" fill="#FF0000"/><rect x="27" y="899" width="980" height="1" fill="#FF0000"/><rect x="34" y="876" width="1" height="10" fill="#A0A0A0"/><rect x="63" y="876" width="1" height="10" fill="#A0A0A0"/><rect x="91" y="876" width="1" height="17" fill="#00E000"/><rect x="119" y="876" width="1" height="10" fill="#A0A0A0"/><rect x="148" y="876" width="1" height="10" fill="#A0A0A0"/><rect x="176" y="876" width="1" height="10" fill="#A0A0A0"/><rect x="205" y="876" width="1" height="10" fill="#A0A0A0"/><rect x="233" y="876" width="1" height="23" fill="#FF0000"/><rect x="261" y="876" width="1" height="10" fill="#A0A0A0"/><rect x="290" y="876" width="1" height="10" fill="#A0A0A0"/><rect x="318" y="876" width="1" height="10" fill="#A0A0A0"/><rect x="346" y="876" width="1" height="10" fill="#A0A0A0"/><rect x="375" y="876" width="1" height="17" fill="#00E000"/><rect x="403" y="876" width="1" height="10" fill="#A0A0A0"/><rect x="431" y="876" width="1" height="10" fill="#A0A0A0"/><rect x="460" y="876" width="1" height="10" fill="#A0A0A0"/><rect x="488" y="876" width="1" height="10" fill="#A0A0A0"/><rect x="517" y="876" width="1" height="23" fill="#FF0000"/><rect x="545" y="876" width="1" height="10" fill="#A0A0A0"/><rect x="573" y="876" width="1" height="10" fill="#A0A0A0"/><rect x="602" y="876" width="1" height="10" fill="#A0A0A0"/><rect x="630" y="876" width="1" height="10" fill="#A0A0A0"/><rect x="658" y="876" width="1" height="17" fill="#00E000"/><rect x="687" y="876" width="1" height="10" fill="#A0A0A0"/><rect x="715" y="876" width="1" height="10" fill="#A0A0A0"/><rect x="743" y="876" width="1" height="10" fill="#A0A0A0"/><rect x="772" y="876" width="1" height="10" fill="#A0A0A0"/><rect x="800" y="876" width="1" height="23" fill="#FF0000"/><rect x="828" y="876" width="1" height="10" fill="#A0A0A0"/><rect x="857" y="876" width="1" height="10" fill="#A0A0A0"/><rect x="885" y="876" width="1" height="10" fill="#A0A0A0"/><rect x="914" y="876" width="1" height="10" fill="#A0A0A0"/><rect x="942" y="876" width="1" height="17" fill="#00E000"/><rect x="970" y="876" width="1" height="10" fill="#A0A0A0"/><rect x="999" y="876" width="1" height="10" fill="#A0A0A0"/><rect x="61" y="876" width="1" height="23" fill="#FF0000"/><rect x="10" y="14" width="16" height="1" fill="#00E000"/><rect x="17" y="42" width="9" height="1" fill="#A0A0A0"/><rect x="17" y="70" width="9" height="1" fill="#A0A0A0"/><rect x="17" y="99" width="9" height="1" fill="#A0A0A0"/><rect x="17" y="127" width="9" height="1" fill="#A0A0A0"/><rect x="3" y="155" width="23" height="1" fill="#FF0000"/><rect x="17" y="184" width="9" height="1" fill="#A0A0A0"/><rect x="17" y="212" width="9" height="1" fill="#A0A0A0"/><rect x="17" y="240" width="9" height="1" fill="#A0A0A0"/><rect x="17" y="269" width="9" height="1" fill="#A0A0A0"/><rect x="10" y="297" width="16" height="1" fill="#00E000"/><rect x="17" y="325" width="9" height="1" fill="#A0A0A0"/><rect x="17" y="354" width="9" height="1" fill="#A0A0A0"/><rect x="17" y="382" width="9" height="1" fill="#A0A0A0"/><rect x="17" y="410" width="9" height="1" fill="#A0A0A0"/><rect x="3" y="439" width="23" height="1" fill="#FF0000"/><rect x="17" y="467" width="9" height="1" fill="#A0A0A0"/><rect x="17" y="495" width="9" height="1" fill="#A0A0A0"/><rect x="17" y="524" width="9" height="1" fill="#A0A0A0"/><rect x="17" y="552" width="9" height="1" fill="#A0A0A0"/><rect x="10" y="580" width="16" height="1" fill="#00E000"/><rect x="17" y="609" width="9" height="1" fill="#A0A0A0"/><rect x="17" y="637" width="9" height="1" fill="#A0A0A0"/><rect x="17" y="665" width="9" height="1" fill="#A0A0A0"/><rect x="17" y="693" width="9" height="1" fill="#A0A0A0"/><rect x="3" y="722" width="23" height="1" fill="#FF0000"/><rect x="17" y="750" width="9" height="1" fill="#A0A0A0"/><rect x="17" y="778" width="9" height="1" fill="#A0A0A0"/><rect x="17" y="807" width="9" height="1" fill="#A0A0A0"/><rect x="17" y="835" width="9" height="1" fill="#A0A0A0"/><rect x="10" y="863" width="16" height="1" fill="#00E000"/><rect x="3" y="553" width="23" height="1" fill="#FF0000"/><g transform="translate(3,876)"><rect x="0" y="0" width="24" height="24" fill="#D4D0C8"/><path d="M0.5 23 V0.5 H23" stroke="#fff" fill="none"/><path d="M0 23.5 H23.5 V0" stroke="#404040" fill="none"/><path d="M1 22.5 H22.5 V1" stroke="#808080" fill="none"/></g><rect x="513" y="431" width="8" height="1" fill="#E6E600"/><rect x="512" y="432" width="10" height="1" fill="#E6E600"/><rect x="511" y="433" width="12" height="1" fill="#E6E600"/><rect x="510" y="434" width="14" height="1" fill="#E6E600"/><rect x="509" y="435" width="16" height="1" fill="#E6E600"/><rect x="509" y="436" width="16" height="1" fill="#E6E600"/><rect x="509" y="437" width="16" height="1" fill="#E6E600"/><rect x="509" y="438" width="16" height="1" fill="#E6E600"/><rect x="509" y="439" width="16" height="1" fill="#E6E600"/><rect x="509" y="440" width="16" height="1" fill="#E6E600"/><rect x="509" y="441" width="16" height="1" fill="#E6E600"/><rect x="509" y="442" width="16" height="1" fill="#E6E600"/><rect x="510" y="443" width="14" height="1" fill="#E6E600"/><rect x="511" y="444" width="12" height="1" fill="#E6E600"/><rect x="512" y="445" width="10" height="1" fill="#E6E600"/><rect x="513" y="446" width="8" height="1" fill="#E6E600"/><rect x="513" y="431" width="1" height="1" fill="#5E9400"/><rect x="520" y="431" width="1" height="1" fill="#9A7000"/><rect x="512" y="432" width="1" height="1" fill="#5E9400"/><rect x="521" y="432" width="1" height="1" fill="#9A7000"/><rect x="513" y="432" width="1" height="1" fill="#B4D000"/><rect x="520" y="432" width="1" height="1" fill="#C8A800"/><rect x="511" y="433" width="1" height="1" fill="#5E9400"/><rect x="522" y="433" width="1" height="1" fill="#9A7000"/><rect x="512" y="433" width="1" height="1" fill="#B4D000"/><rect x="521" y="433" width="1" height="1" fill="#C8A800"/><rect x="510" y="434" width="1" height="1" fill="#5E9400"/><rect x="523" y="434" width="1" height="1" fill="#9A7000"/><rect x="511" y="434" width="1" height="1" fill="#B4D000"/><rect x="522" y="434" width="1" height="1" fill="#C8A800"/><rect x="509" y="435" width="1" height="1" fill="#5E9400"/><rect x="524" y="435" width="1" height="1" fill="#9A7000"/><rect x="509" y="436" width="1" height="1" fill="#5E9400"/><rect x="524" y="436" width="1" height="1" fill="#9A7000"/><rect x="509" y="437" width="1" height="1" fill="#5E9400"/><rect x="524" y="437" width="1" height="1" fill="#9A7000"/><rect x="509" y="438" width="1" height="1" fill="#5E9400"/><rect x="524" y="438" width="1" height="1" fill="#9A7000"/><rect x="509" y="439" width="1" height="1" fill="#9A7000"/><rect x="524" y="439" width="1" height="1" fill="#5E9400"/><rect x="509" y="440" width="1" height="1" fill="#9A7000"/><rect x="524" y="440" width="1" height="1" fill="#5E9400"/><rect x="509" y="441" width="1" height="1" fill="#9A7000"/><rect x="524" y="441" width="1" height="1" fill="#5E9400"/><rect x="509" y="442" width="1" height="1" fill="#9A7000"/><rect x="524" y="442" width="1" height="1" fill="#5E9400"/><rect x="510" y="443" width="1" height="1" fill="#9A7000"/><rect x="523" y="443" width="1" height="1" fill="#5E9400"/><rect x="511" y="443" width="1" height="1" fill="#C8A800"/><rect x="522" y="443" width="1" height="1" fill="#B4D000"/><rect x="511" y="444" width="1" height="1" fill="#9A7000"/><rect x="522" y="444" width="1" height="1" fill="#5E9400"/><rect x="512" y="444" width="1" height="1" fill="#C8A800"/><rect x="521" y="444" width="1" height="1" fill="#B4D000"/><rect x="512" y="445" width="1" height="1" fill="#9A7000"/><rect x="521" y="445" width="1" height="1" fill="#5E9400"/><rect x="513" y="445" width="1" height="1" fill="#C8A800"/><rect x="520" y="445" width="1" height="1" fill="#B4D000"/><rect x="513" y="446" width="1" height="1" fill="#9A7000"/><rect x="520" y="446" width="1" height="1" fill="#5E9400"/><rect x="513" y="431" width="4" height="1" fill="#5E9400"/><rect x="517" y="431" width="4" height="1" fill="#9A7000"/><rect x="513" y="446" width="4" height="1" fill="#9A7000"/><rect x="517" y="446" width="4" height="1" fill="#5E9400"/><rect x="513" y="435" width="3" height="3" fill="#4A8800"/><rect x="518" y="435" width="3" height="3" fill="#7A6000"/><rect x="513" y="440" width="3" height="3" fill="#7A6000"/><rect x="518" y="440" width="3" height="3" fill="#4A8800"/><rect x="513" y="435" width="1" height="1" fill="#B0B000"/><rect x="520" y="435" width="1" height="1" fill="#B0B000"/><rect x="513" y="442" width="1" height="1" fill="#B0B000"/><rect x="520" y="442" width="1" height="1" fill="#B0B000"/><rect x="517" y="431" width="1" height="16" fill="#F07000"/><rect x="509" y="439" width="16" height="1" fill="#F07000"/><rect x="517" y="435" width="1" height="8" fill="#FF4A68"/><rect x="513" y="439" width="8" height="1" fill="#FF4A68"/><rect x="516" y="439" width="1" height="4" fill="#FF6A84"/><rect x="513" y="438" width="4" height="1" fill="#FF8A9A"/><rect x="516" y="435" width="1" height="3" fill="#E0B060"/><rect x="518" y="439" width="3" height="1" fill="#FF6A84"/></svg>
<div class="t" style="left:361px;top:958px;color:#fff;font-weight:normal;">-150</div>
<div class="t" style="left:503px;top:958px;color:#fff;font-weight:normal;">-100</div>
<div class="t" style="left:645px;top:958px;color:#fff;font-weight:normal;">-50</div>
<div class="t" style="left:787px;top:958px;color:#fff;font-weight:normal;">0</div>
<div class="t" style="left:928px;top:958px;color:#fff;font-weight:normal;">+50</div>
<div class="t" style="left:1070px;top:958px;color:#fff;font-weight:normal;">+100</div>
<div class="t" style="left:1212px;top:958px;color:#fff;font-weight:normal;">+150</div>
<div class="t" style="left:276px;top:956px;color:#000;font-weight:normal;">M</div>
<div class="t" style="left:270px;top:85px;color:#fff;transform-origin:0 0;transform:rotate(-90deg);">+150</div>
<div class="t" style="left:270px;top:226px;color:#fff;transform-origin:0 0;transform:rotate(-90deg);">+100</div>
<div class="t" style="left:270px;top:368px;color:#fff;transform-origin:0 0;transform:rotate(-90deg);">+50</div>
<div class="t" style="left:270px;top:510px;color:#fff;transform-origin:0 0;transform:rotate(-90deg);">0</div>
<div class="t" style="left:270px;top:651px;color:#fff;transform-origin:0 0;transform:rotate(-90deg);">-50</div>
<div class="t" style="left:270px;top:793px;color:#fff;transform-origin:0 0;transform:rotate(-90deg);">-100</div>
<div class="t" style="left:270px;top:934px;color:#fff;transform-origin:0 0;transform:rotate(-90deg);">-150</div>
<div class="t" style="left:5px;top:982px;color:#000;font-weight:normal;letter-spacing:0.15px">Открыть существующий файл</div>
<div style="position:absolute;left:290px;top:40px;width:4px;height:274px;background:linear-gradient(to right,rgba(0,0,0,0.45),rgba(0,0,0,0));-webkit-mask-image:linear-gradient(to bottom,transparent,black 6px);"></div>
<div style="position:absolute;left:3px;top:314px;width:287px;height:4px;background:linear-gradient(to bottom,rgba(0,0,0,0.45),rgba(0,0,0,0));-webkit-mask-image:linear-gradient(to right,transparent,black 6px);"></div>
<div style="position:absolute;left:290px;top:314px;width:4px;height:4px;background:radial-gradient(circle at 0 0,rgba(0,0,0,0.45),rgba(0,0,0,0) 4px);"></div>
<svg style="position:absolute;left:-1px;top:36px;" width="291" height="278" viewBox="0 0 291 278"><rect x="0" y="0" width="291" height="278" fill="#D4D0C8"/><path d="M0.5 277 V0.5 H290" stroke="#D4D0C8" fill="none"/><path d="M1.5 276 V1.5 H289" stroke="#fff" fill="none"/><path d="M1 276.5 H289.5 V1" stroke="#808080" fill="none"/><path d="M0 277.5 H290.5 V0" stroke="#404040" fill="none"/></svg>
<div style="position:absolute;left:2px;top:60px;width:284px;height:21px;background:#0A246A;"></div>
<div class="t" style="left:26px;top:44px;color:#000;font-weight:normal;letter-spacing:0.15px">Новый проект</div>
<div class="t" style="left:235px;top:44px;color:#000;font-weight:normal;letter-spacing:0.15px">Ctrl+N</div>
<div class="t" style="left:26px;top:65px;color:#fff;font-weight:normal;letter-spacing:0.15px">Открыть<span style="letter-spacing:0.7px">...</span></div>
<div class="t" style="left:235px;top:65px;color:#fff;font-weight:normal;letter-spacing:0.15px">Ctrl+O</div>
<div class="t" style="left:26px;top:86px;color:#000;font-weight:normal;letter-spacing:0.15px">Сохранить проект</div>
<div class="t" style="left:235px;top:86px;color:#000;font-weight:normal;letter-spacing:0.15px">Ctrl+S</div>
<div class="t" style="left:26px;top:107px;color:#000;font-weight:normal;letter-spacing:0.15px">Сохранить проект и как <span style="letter-spacing:0.7px">...</span></div>
<div class="t" style="left:26px;top:128px;color:#000;font-weight:normal;letter-spacing:0.15px">Сохранить выбранные УП<span style="letter-spacing:0.7px">...</span></div>
<div class="t" style="left:26px;top:149px;color:#000;font-weight:normal;letter-spacing:0.15px">Экспорт PDF<span style="letter-spacing:0.7px">...</span></div>
<div class="t" style="left:26px;top:178px;color:#000;font-weight:normal;letter-spacing:0.15px">Последние файлы<span style="letter-spacing:0.7px">...</span></div>
<div class="t" style="left:26px;top:206px;color:#000;font-weight:normal;letter-spacing:0.15px">Последние проекты<span style="letter-spacing:0.7px">...</span></div>
<div class="t" style="left:26px;top:235px;color:#000;font-weight:normal;letter-spacing:0.15px">Закрыть проект "Без названия.g2g"</div>
<div class="t" style="left:235px;top:235px;color:#000;font-weight:normal;letter-spacing:0.15px">Ctrl+F4</div>
<div class="t" style="left:26px;top:265px;color:#000;font-weight:normal;letter-spacing:0.15px">Печатать</div>
<div class="t" style="left:235px;top:265px;color:#000;font-weight:normal;letter-spacing:0.15px">Ctrl+P</div>
<div class="t" style="left:26px;top:295px;color:#000;font-weight:normal;letter-spacing:0.15px">Выход</div>
<div style="position:absolute;left:4px;top:168px;width:281px;height:1px;background:#808080;"></div>
<div style="position:absolute;left:4px;top:169px;width:281px;height:1px;background:#fff;"></div>
<div style="position:absolute;left:4px;top:196px;width:281px;height:1px;background:#808080;"></div>
<div style="position:absolute;left:4px;top:197px;width:281px;height:1px;background:#fff;"></div>
<div style="position:absolute;left:4px;top:224px;width:281px;height:1px;background:#808080;"></div>
<div style="position:absolute;left:4px;top:225px;width:281px;height:1px;background:#fff;"></div>
<div style="position:absolute;left:4px;top:254px;width:281px;height:1px;background:#808080;"></div>
<div style="position:absolute;left:4px;top:255px;width:281px;height:1px;background:#fff;"></div>
<div style="position:absolute;left:4px;top:284px;width:281px;height:1px;background:#808080;"></div>
<div style="position:absolute;left:4px;top:285px;width:281px;height:1px;background:#fff;"></div>
<svg style="position:absolute;left:273px;top:180px;" width="4" height="7" viewBox="0 0 4 7"><path d="M0 0 L4 3.5 L0 7Z" fill="#000"/></svg>
<svg style="position:absolute;left:273px;top:208px;" width="4" height="7" viewBox="0 0 4 7"><path d="M0 0 L4 3.5 L0 7Z" fill="#000"/></svg>
<svg style="position:absolute;left:6px;top:44px;" width="12" height="12" viewBox="0 0 12 12"><path d="M0.5 12 V2 M0 1 H12 M11.5 1 V6 M0 11.5 H6" stroke="#454545" fill="none"/><rect x="0" y="0" width="12" height="2" fill="#454545"/><circle cx="9.5" cy="9.5" r="1.8" fill="#555"/></svg>
<svg style="position:absolute;left:6px;top:65px;" width="12" height="12" viewBox="0 0 12 12"><path d="M0.5 11.5 V0.5 H4.5 L6 2.5 H11.5 V11.5Z M0.5 4.5 H3.5 L5 2.5" stroke="#66624E" fill="none"/><rect x="4" y="2" width="8" height="2" fill="#66624E"/></svg>
<svg style="position:absolute;left:6px;top:86px;" width="12" height="12" viewBox="0 0 12 12"><path d="M0.5 11.5 V0.5 H9.5 L11.5 2.5 V11.5Z" stroke="#454545" fill="none"/><rect x="3.5" y="0.5" width="5" height="3" fill="none" stroke="#454545"/><rect x="6" y="1" width="2" height="2.5" fill="#454545"/><rect x="2.5" y="7.5" width="7" height="4" fill="none" stroke="#454545"/></svg>
<svg style="position:absolute;left:6px;top:107px;" width="14" height="14" viewBox="0 0 14 14"><path d="M8 11.5 H0.5 V0.5 H9.5 L11.5 2.5 V5" stroke="#454545" fill="none"/><rect x="3.5" y="0.5" width="5" height="3" fill="none" stroke="#454545"/><rect x="6" y="1" width="2" height="2.5" fill="#454545"/><path d="M2.5 11 V7.5 H7" stroke="#454545" fill="none"/><path d="M6 11.8 L11.2 6.6 L13.2 8.6 L8 13.8 H6Z" fill="#454545"/></svg>
<svg style="position:absolute;left:6px;top:128px;" width="12" height="12" viewBox="0 0 12 12"><path d="M3.5 2 V0.5 H10 L11.5 2 V9 H10" stroke="#454545" fill="none"/><path d="M0.5 11.5 V2.5 H8 L9.5 4 V11.5Z" stroke="#454545" fill="none"/><rect x="2.5" y="2.5" width="4" height="2.5" fill="none" stroke="#454545"/><rect x="2.5" y="8.5" width="5" height="3" fill="none" stroke="#454545"/></svg>
<svg style="position:absolute;left:6px;top:149px;" width="12" height="12" viewBox="0 0 12 12"><path d="M5.5 0.5 H10.5 V9 L8 11.5 H1.5 V7.5" stroke="#E0344C" fill="none" stroke-width="1.1"/><path d="M1 0 H4.5 V6.5 L2.75 5 L1 6.5Z" fill="#E0344C"/><path d="M8 11.5 L10.5 9 H8Z" fill="#E0344C"/></svg>
<svg style="position:absolute;left:7px;top:235px;" width="12" height="12" viewBox="0 0 12 12"><path d="M5.5 11.5 H0.5 V0.5 H9.5 V6" stroke="#E0344C" fill="none" stroke-width="1.1"/><path d="M6.5 7 L11 11.5 M11 7 L6.5 11.5" stroke="#E0344C" stroke-width="1"/></svg>
<svg style="position:absolute;left:6px;top:265px;" width="12" height="12" viewBox="0 0 12 12"><rect x="2.5" y="0.5" width="7" height="3" fill="none" stroke="#454545"/><path d="M2 8.5 H0.5 V3.5 H11.5 V8.5 H10" stroke="#454545" fill="none"/><rect x="2.5" y="7.5" width="7" height="4" fill="none" stroke="#454545"/><rect x="2" y="7" width="8" height="1.2" fill="#454545"/><rect x="8" y="5" width="2" height="1" fill="#454545"/></svg>
<svg style="position:absolute;left:6px;top:295px;" width="12" height="12" viewBox="0 0 12 12"><rect x="0.5" y="0.5" width="11" height="11" fill="none" stroke="#E0344C"/><rect x="0" y="0" width="12" height="3" fill="#E0344C"/><rect x="4" y="6" width="4" height="2" fill="#E0344C"/></svg>
</body></html>
